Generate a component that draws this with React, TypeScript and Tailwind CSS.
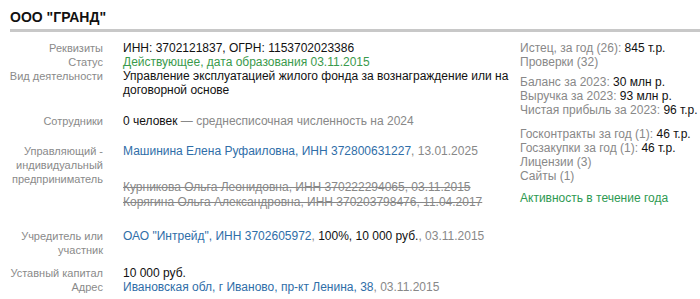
import React from 'react';

const Label: React.FC<{ children: React.ReactNode }> = ({ children }) => (
    <div className="text-right text-[11px] leading-[14px] text-[#8a8a8a]">{children}</div>
);

const Muted: React.FC<{ children: React.ReactNode }> = ({ children }) => (
    <span className="text-[#888]">{children}</span>
);

const Link: React.FC<{ children: React.ReactNode }> = ({ children }) => (
    <a href="#" className="text-[#2f6ea8]">{children}</a>
);

export default function App() {
    return (
        <div className="w-[700px] h-[299px] overflow-hidden bg-white pt-[10px] font-['Liberation_Sans',Arial,sans-serif] text-[12px] leading-[14px] text-[#111]">
            <h1 className="ml-[10px] text-[14px] leading-[14px] font-bold text-[#111]">ООО "ГРАНД"</h1>
            <div className="ml-[10px] mt-[5px] h-[3px] bg-[#c8c8c8]" />

            <div className="flex pt-[9px]">
                <div className="w-[520px] grid grid-cols-[103px_1fr] gap-x-5 content-start">
                    <Label>Реквизиты</Label>
                    <div>ИНН: 3702121837, ОГРН: 1153702023386</div>

                    <Label>Статус</Label>
                    <div className="text-[#3a9a4c]">Действующее, дата образования 03.11.2015</div>

                    <Label>Вид деятельности</Label>
                    <div>Управление эксплуатацией жилого фонда за вознаграждение или на договорной основе</div>

                    <div className="col-span-2 h-[17px]" />
                    <Label>Сотрудники</Label>
                    <div>
                        0 человек <Muted>— среднесписочная численность на 2024</Muted>
                    </div>

                    <div className="col-span-2 h-[16px]" />
                    <Label>
                        Управляющий -<br />
                        индивидуальный<br />
                        предприниматель
                    </Label>
                    <div>
                        <div>
                            <Link>Машинина Елена Руфаиловна, ИНН 372800631227</Link>
                            <Muted>, 13.01.2025</Muted>
                        </div>
                        <div className="mt-[22px] text-[#888] line-through">Курникова Ольга Леонидовна, ИНН 370222294065, 03.11.2015</div>
                        <div className="mt-[1px] text-[#888] line-through">Корягина Ольга Александровна, ИНН 370203798476, 11.04.2017</div>
                    </div>

                    <div className="col-span-2 h-[20px]" />
                    <Label>
                        Учредитель или<br />
                        участник
                    </Label>
                    <div>
                        <Link>ОАО "Интрейд", ИНН 3702605972</Link>
                        <Muted>, </Muted>100%, 10 000 руб.<Muted>, 03.11.2015</Muted>
                    </div>

                    <div className="col-span-2 h-[9px]" />
                    <Label>Уставный капитал</Label>
                    <div>10 000 руб.</div>

                    <Label>Адрес</Label>
                    <div>
                        <Link>Ивановская обл, г Иваново, пр-кт Ленина, 38</Link>
                        <Muted>, 03.11.2015</Muted>
                    </div>
                </div>

                <div className="flex flex-col text-[#888]">
                    <div>
                        Истец, за год (26): <span className="text-[#111]">845 т.р.</span>
                    </div>
                    <div>Проверки (32)</div>

                    <div className="mt-[6px]">
                        Баланс за 2023: <span className="text-[#111]">30 млн р.</span>
                    </div>
                    <div>
                        Выручка за 2023: <span className="text-[#111]">93 млн р.</span>
                    </div>
                    <div>
                        Чистая прибыль за 2023: <span className="text-[#111]">96 т.р.</span>
                    </div>

                    <div className="mt-[10px]">
                        Госконтракты за год (1): <span className="text-[#111]">46 т.р.</span>
                    </div>
                    <div>
                        Госзакупки за год (1): <span className="text-[#111]">46 т.р.</span>
                    </div>
                    <div>Лицензии (3)</div>
                    <div>Сайты (1)</div>

                    <div className="mt-[8px] text-[#2e9a52]">Активность в течение года</div>
                </div>
            </div>
        </div>
    );
}
